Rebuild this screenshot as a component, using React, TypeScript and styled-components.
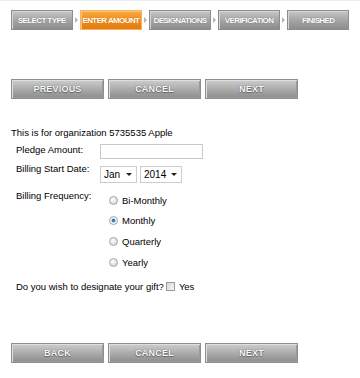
import React, { useState } from 'react';
import styled, { createGlobalStyle } from 'styled-components';

const GlobalStyle = createGlobalStyle`
  html, body {
    margin: 0;
    padding: 0;
    background: #ffffff;
  }
  body {
    font-family: 'Liberation Sans', Arial, sans-serif;
    font-size: 9.5px;
    color: #000000;
  }
`;

const Page = styled.div`
  width: 360px;
  height: 378px;
  box-sizing: border-box;
  border-top: 1px solid #ededed;
  padding: 9px 11px 0;
  overflow: hidden;
`;

const Steps = styled.div`
  display: flex;
  align-items: center;
`;

const Step = styled.div<{ active?: boolean }>`
  width: 62px;
  height: 20px;
  box-sizing: border-box;
  display: flex;
  align-items: center;
  justify-content: center;
  font-size: 8px;
  font-weight: bold;
  letter-spacing: -0.6px;
  color: #ffffff;
  white-space: nowrap;
  border: 1px solid ${({ active }) => (active ? '#f6b25e' : '#8c8c8c')};
  background: ${({ active }) => (active
    ? 'linear-gradient(#f8a93f, #f0901f 50%, #e37a0c)'
    : 'linear-gradient(#c6c6c6, #a6a6a6 50%, #8c8c8c)')};
  box-shadow: inset 1px 1px 0 ${({ active }) => (active ? '#fbc27a' : '#d6d6d6')};
  text-shadow: 0 0 1px ${({ active }) => (active ? '#b85f00' : '#5a5a5a')};
`;

const StepArrow = styled.div`
  width: 7.5px;
  display: flex;
  justify-content: center;

  &::before {
    content: '';
    border-left: 3px solid #b4b4b4;
    border-top: 3px solid transparent;
    border-bottom: 3px solid transparent;
  }
`;

const ButtonRow = styled.div<{ top: number }>`
  display: flex;
  gap: 4px;
  margin-top: ${({ top }) => top}px;
`;

const NavButton = styled.button`
  width: 93px;
  height: 20px;
  box-sizing: border-box;
  padding: 0;
  font-family: 'Liberation Sans', Arial, sans-serif;
  font-size: 9px;
  font-weight: bold;
  letter-spacing: 0.2px;
  color: #fafafa;
  border: 1px solid #8e8e8e;
  background: linear-gradient(#cdcdcd, #acacac 50%, #8c8c8c);
  box-shadow: inset 1px 1px 0 #dedede, inset -1px -1px 0 #9a9a9a;
  text-shadow: 0 0 1px #4a4a4a, 0 1px 1px #6a6a6a;
  cursor: pointer;
`;

const Intro = styled.div`
  margin-top: 28px;
  line-height: 12px;
  height: 12px;
`;

const Form = styled.div`
  margin-top: 5px;
  padding-left: 5px;
`;

const Row = styled.div<{ top: number }>`
  display: flex;
  align-items: flex-start;
  margin-top: ${({ top }) => top}px;
`;

const Label = styled.div`
  width: 84px;
  line-height: 12px;
`;

const TextInput = styled.input`
  width: 103px;
  height: 15px;
  box-sizing: border-box;
  border: 1px solid #c9c9c9;
  padding: 0 3px;
  font: inherit;
  outline: none;
`;

const Selects = styled.div`
  display: flex;
  gap: 3px;
  margin-top: 3px;
`;

const SelectWrap = styled.div<{ width: number }>`
  position: relative;
  width: ${({ width }) => width}px;
  height: 17px;

  &::after {
    content: '';
    position: absolute;
    right: 5px;
    top: 7px;
    border-top: 3px solid #222222;
    border-left: 3px solid transparent;
    border-right: 3px solid transparent;
    pointer-events: none;
  }
`;

const Select = styled.select`
  appearance: none;
  width: 100%;
  height: 100%;
  box-sizing: border-box;
  border: 1px solid #cccccc;
  border-radius: 0;
  background: #ffffff;
  padding: 0 0 0 3px;
  font-family: 'Liberation Sans', Arial, sans-serif;
  font-size: 10px;
  color: #000000;
  outline: none;
`;

const RadioList = styled.div`
  display: flex;
  flex-direction: column;
  padding-left: 9px;
`;

const RadioItem = styled.label`
  display: flex;
  align-items: center;
  gap: 4px;
  height: 20.67px;
`;

const Radio = styled.input`
  appearance: none;
  margin: 0;
  width: 9px;
  height: 9px;
  border-radius: 50%;
  border: 1px solid #a4a4a4;
  box-sizing: border-box;
  background: radial-gradient(circle at 40% 35%, #ffffff, #d4d4d4 80%);

  &:checked {
    background: radial-gradient(circle, #1f6fc2 0, #3b8ad6 1.6px, #ffffff 2.4px, #dedede 100%);
  }
`;

const Designate = styled.div`
  display: flex;
  align-items: center;
  height: 12px;
  margin-top: 8px;
  padding-left: 5px;
`;

const Checkbox = styled.input`
  appearance: none;
  margin: 0 4px 0 2px;
  width: 9px;
  height: 9px;
  box-sizing: border-box;
  border: 1px solid #9a9a9a;
  background: linear-gradient(135deg, #d8d8d8, #f4f4f4);
`;

const steps = ['SELECT TYPE', 'ENTER AMOUNT', 'DESIGNATIONS', 'VERIFICATION', 'FINISHED'];
const frequencies = ['Bi-Monthly', 'Monthly', 'Quarterly', 'Yearly'];

export default function App() {
  const [frequency, setFrequency] = useState('Monthly');

  return (
    <Page>
      <GlobalStyle />
      <Steps>
        {steps.map((s, i) => (
          <React.Fragment key={s}>
            {i > 0 && <StepArrow />}
            <Step active={i === 1}>{s}</Step>
          </React.Fragment>
        ))}
      </Steps>

      <ButtonRow top={49}>
        <NavButton>PREVIOUS</NavButton>
        <NavButton>CANCEL</NavButton>
        <NavButton>NEXT</NavButton>
      </ButtonRow>

      <Intro>This is for organization 5735535 Apple</Intro>

      <Form>
        <Row top={0}>
          <Label>Pledge Amount:</Label>
          <TextInput type="text" />
        </Row>
        <Row top={4}>
          <Label>Billing Start Date:</Label>
          <Selects>
            <SelectWrap width={37}>
              <Select defaultValue="Jan">
                <option>Jan</option>
                <option>Feb</option>
                <option>Mar</option>
              </Select>
            </SelectWrap>
            <SelectWrap width={42}>
              <Select defaultValue="2014">
                <option>2014</option>
                <option>2015</option>
              </Select>
            </SelectWrap>
          </Selects>
        </Row>
        <Row top={7}>
          <Label>Billing Frequency:</Label>
          <RadioList>
            {frequencies.map((f) => (
              <RadioItem key={f}>
                <Radio
                  type="radio"
                  name="freq"
                  checked={frequency === f}
                  onChange={() => setFrequency(f)}
                />
                {f}
              </RadioItem>
            ))}
          </RadioList>
        </Row>
      </Form>

      <Designate>
        Do you wish to designate your gift?
        <Checkbox type="checkbox" />
        Yes
      </Designate>

      <ButtonRow top={50}>
        <NavButton>BACK</NavButton>
        <NavButton>CANCEL</NavButton>
        <NavButton>NEXT</NavButton>
      </ButtonRow>
    </Page>
  );
}
